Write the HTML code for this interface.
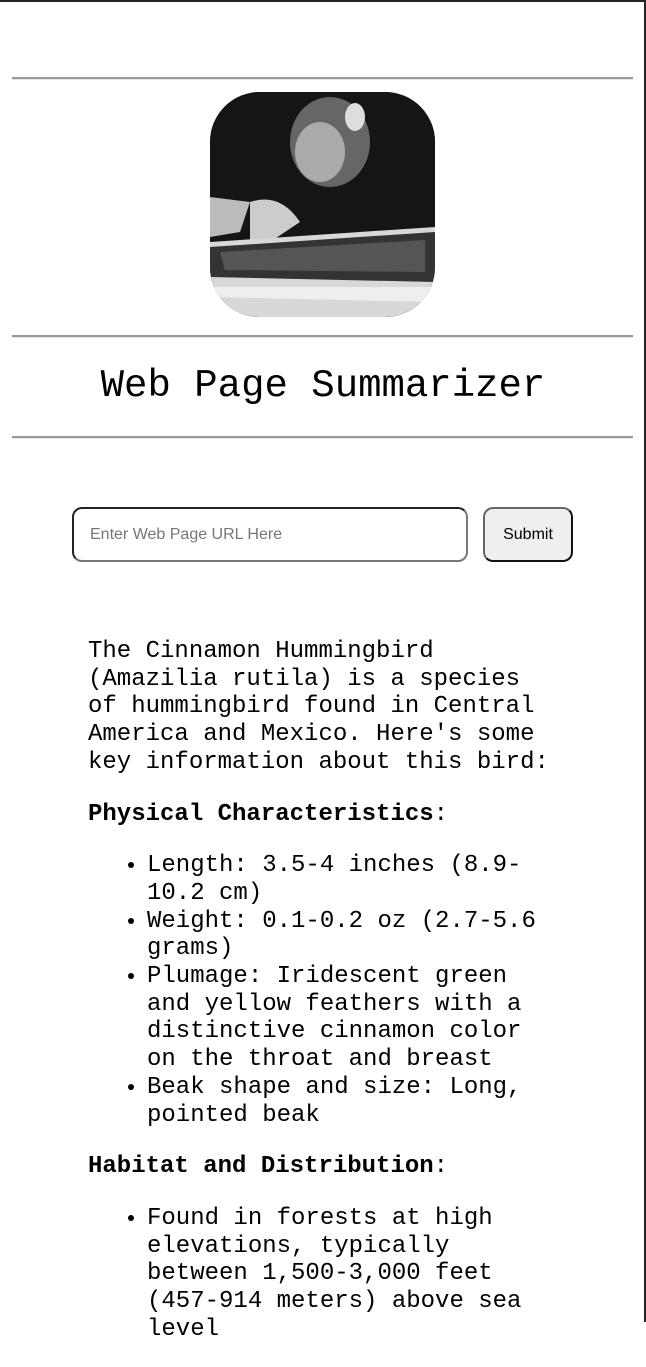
<!DOCTYPE html>
<html><head><style>
html,body{margin:0;padding:0;background:#fff;}
body{width:646px;height:1322px;overflow:hidden;position:relative;box-sizing:border-box;border-top:2px solid #222;border-right:2px solid #222;}
hr{position:absolute;left:12px;width:621px;margin:0;border:0;border-top:2px solid #999;border-bottom:1px solid #e6e6e6;height:0;}
.img{position:absolute;left:210px;top:90px;width:225px;height:225px;border-radius:50px;overflow:hidden;background:#111;}
h1{position:absolute;top:360px;left:0;width:646px;text-align:center;margin:0;font:400 39px/48px "Liberation Mono",monospace;color:#000;}
.inp{position:absolute;left:72px;top:505px;height:51px;border:2px solid #222;border-right-color:#777;border-bottom-color:#777;border-radius:10px;font:16px "Liberation Sans",sans-serif;color:#777;line-height:51px;padding-left:16px;width:376px;}
.btn{position:absolute;left:483px;top:505px;width:86px;height:51px;border:2px solid #666;border-right-color:#111;border-bottom-color:#111;border-radius:10px;background:#efefef;font:16px "Liberation Sans",sans-serif;line-height:51px;text-align:center;color:#000;}
.c{position:absolute;left:88px;top:636px;width:475px;font:24px/27.7px "Liberation Mono",monospace;color:#000;}
.c p{margin:0 0 24px 0;}
.c ul{margin:0 0 24px 0;padding-left:59px;width:400px;}
</style></head><body>
<hr style="top:75px">
<div class="img"><svg width="225" height="225" viewBox="0 0 225 225">
<rect width="225" height="225" fill="#151515"/>
<ellipse cx="120" cy="50" rx="40" ry="45" fill="#666"/>
<ellipse cx="110" cy="60" rx="25" ry="30" fill="#aaa"/>
<ellipse cx="145" cy="25" rx="10" ry="14" fill="#ddd"/>
<path d="M0 105 L40 110 L30 140 L0 145Z" fill="#bbb"/>
<path d="M40 110 Q70 100 90 130 L60 150 L40 150Z" fill="#ccc"/>
<path d="M0 150 L225 135 L225 225 L0 225Z" fill="#d8d8d8"/>
<path d="M0 155 L225 140 L225 190 L0 185Z" fill="#333"/>
<path d="M10 160 L215 148 L215 180 L15 178Z" fill="#555"/>
<path d="M0 195 L225 195 L225 210 L0 205Z" fill="#eee"/>
</svg></div>
<hr style="top:333px">
<h1>Web Page Summarizer</h1>
<hr style="top:434px">
<div class="inp">Enter Web Page URL Here</div>
<div class="btn">Submit</div>
<div class="c">
<p>The Cinnamon Hummingbird (Amazilia rutila) is a species of hummingbird found in Central America and Mexico. Here's some key information about this bird:</p>
<p><b>Physical Characteristics</b>:</p>
<ul>
<li>Length: 3.5-4 inches (8.9-10.2 cm)</li>
<li>Weight: 0.1-0.2 oz (2.7-5.6 grams)</li>
<li>Plumage: Iridescent green and yellow feathers with a distinctive cinnamon color on the throat and breast</li>
<li>Beak shape and size: Long, pointed beak</li>
</ul>
<p><b>Habitat and Distribution</b>:</p>
<ul>
<li>Found in forests at high elevations, typically between 1,500-3,000 feet (457-914 meters) above sea level</li>
</ul>
</div>
</body></html>
